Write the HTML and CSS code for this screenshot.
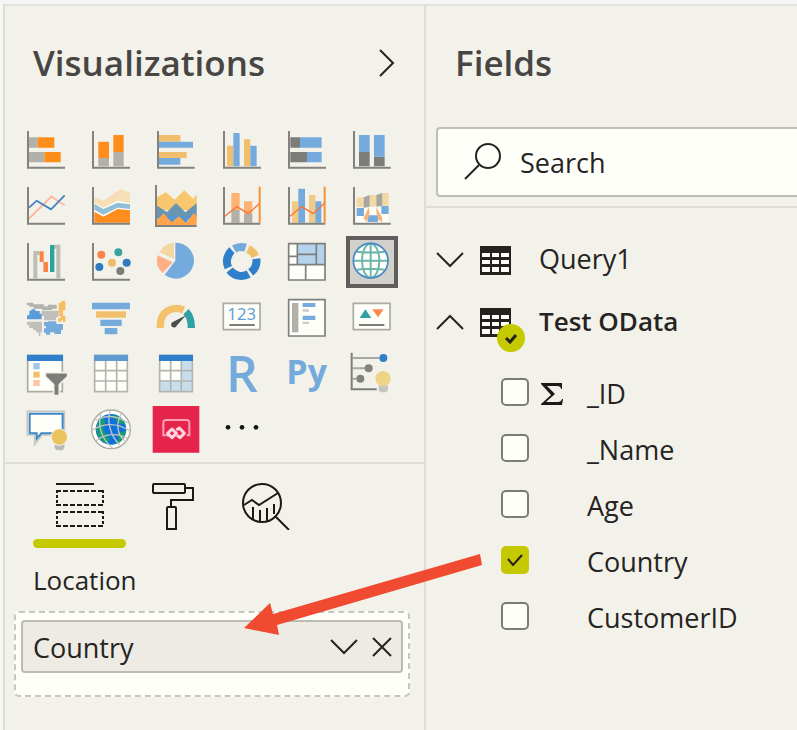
FILE: index.html
```html
<!DOCTYPE html>
<html lang="en">
<head>
<meta charset="utf-8">
<title>Report editor</title>
<link rel="stylesheet" href="styles.css">
</head>
<body>
<main class="workspace">
  <section class="panel visuals" aria-labelledby="vis-title">
    <header class="panel-header">
      <h2 id="vis-title">Visualizations</h2>
      <button class="plain" aria-label="Collapse pane"><svg width="18" height="30" viewBox="0 0 18 30"><path class="line" d="M2 2L15 15L2 28"/></svg></button>
    </header>

    <div class="gallery">
      <button aria-label="Stacked bar chart"><svg viewBox="20 12 156 156"><path fill="#b1b0ab" d="M47 52h26v31H47zM47 96h46v31H47z"/><path fill="#ff8d1c" d="M73 52h50v31H73zM93 96h49v31H93z"/><path class="axis" d="M44 33v110h111"/></svg></button>
      <button aria-label="Stacked column chart"><svg viewBox="216 12 156 156"><path fill="#b1b0ab" d="M256 114h32v25h-32zM301 96h31v43h-31z"/><path fill="#ff8d1c" d="M256 65h32v49h-32zM301 45h31v51h-31z"/><path class="axis" d="M240 33v110h111"/></svg></button>
      <button aria-label="Clustered bar chart"><svg viewBox="412 12 156 156"><path fill="#f1bf6c" d="M439 45h64v20h-64zM439 96h83v18h-83z"/><path fill="#75abdc" d="M439 65h102v18H439zM439 114h64v20h-64z"/><path class="axis" d="M436 33v110h110"/></svg></button>
      <button aria-label="Clustered column chart"><svg viewBox="20 12 156 156"><path fill="#f1bf6c" d="M53 77h19v62H53zM104 58h19v81h-19z"/><path fill="#75abdc" d="M72 39h19v100H72zM123 77h19v62h-19z"/><path class="axis" d="M44 33v110h111"/></svg></button>
      <button aria-label="100% stacked bar chart"><svg viewBox="216 12 156 156"><path fill="#7c7c79" d="M244 52h29v31h-29zM244 96h50v31h-50z"/><path fill="#75abdc" d="M273 52h65v31h-65zM294 96h44v31h-44z"/><path class="axis" d="M240 33v110h111"/></svg></button>
      <button aria-label="100% stacked column chart"><svg viewBox="412 12 156 156"><path fill="#7c7c79" d="M451 96h32v43h-32zM496 110h32v29h-32z"/><path fill="#75abdc" d="M451 45h32v51h-32zM496 45h32v65h-32z"/><path class="axis" d="M436 33v110h110"/></svg></button>

      <button aria-label="Line chart"><svg viewBox="20 180 156 156"><path fill="none" stroke="#ffb28d" stroke-width="5" d="M47 296L114 230L154 256"/><path fill="none" stroke="#3e7fc1" stroke-width="5" d="M47 263L70 242L113 268L154 226"/><path class="axis" d="M44 201v110h111"/></svg></button>
      <button aria-label="Area chart"><svg viewBox="216 180 156 156"><path fill="#f6dfb6" d="M244 230L270 242L323 207L351 218V252L314 243L271 264L244 248z"/><path fill="#fffffa" d="M244 248L271 264L314 243L351 250V273L314 268L271 290L244 275z"/><path fill="#8fbfd8" d="M244 251L271 267L314 248L351 253V267L314 263L271 284L244 269z"/><path fill="#ff8d1c" d="M244 275L271 290L314 267L351 271V308H244z"/><path class="axis" d="M240 201v110h111"/></svg></button>
      <button aria-label="Stacked area chart"><svg viewBox="412 180 156 156"><path fill="#f7c66d" d="M433 232L459 217L486 239L515 211L542 237L552 222V270H433z"/><path fill="#6795b2" d="M433 257L463 276L490 249L518 277L552 250V296H433z"/><path fill="#5595d2" d="M448 288H535L518 311H460z"/><path fill="#ffa44a" d="M433 300L453 280L477 307L499 289L520 309L543 280L552 289V316H433z"/><path class="axis" d="M430 195v123h122"/></svg></button>
      <button aria-label="Line and stacked column chart"><svg viewBox="20 180 156 156"><path fill="#b1b0ab" d="M66 270h25v38H66zM104 282h25v26h-25z"/><path fill="#ffb171" d="M66 219h25v51H66zM104 244h25v38h-25z"/><path class="axis" d="M44 201v110h109"/><path fill="none" stroke="#f97538" stroke-width="4" d="M47 289L82 260L117 281L151 250"/><path stroke="#f59132" stroke-width="6" d="M151 200v108"/></svg></button>
      <button aria-label="Line and clustered column chart"><svg viewBox="216 180 156 156"><path fill="#efcb86" d="M249 244h19v64h-19zM300 225h19v83h-19z"/><path fill="#75abdc" d="M268 206h20v102h-20zM319 244h18v64h-18z"/><path class="axis" d="M240 201v110h109"/><path fill="none" stroke="#f97538" stroke-width="4" d="M243 289L278 260L313 281L346 250"/><path stroke="#f59132" stroke-width="6" d="M347 200v108"/></svg></button>
      <button aria-label="Ribbon chart"><svg viewBox="412 180 156 156"><path fill="#fffffa" d="M444 230h96v78h-96z"/><path fill="#f4d8a4" d="M444 232h21v30h-21zM483 225h20v35h-20zM521 219h19v38h-19z"/><path fill="#a7a69f" d="M465 232L483 225V260L465 264zM503 225L521 219V258L503 260z"/><path fill="#75abdc" d="M444 264h22v24h-22zM518 258h22v24h-22zM477 286h31v20h-31z"/><path fill="#f9b47d" d="M466 292L480 261L483 281L474 306L464 295zM503 261L521 293V307L509 299L503 278z"/><path class="axis" d="M436 201v110h110"/></svg></button>

      <button aria-label="Waterfall chart"><svg viewBox="20 12 156 156"><path fill="none" stroke="#bdbdb8" stroke-width="12" d="M66 139V63h13"/><path fill="none" stroke="#bdbdb8" stroke-width="12" d="M118 44h17v95"/><path fill="#f98446" d="M79 58h12v32h13v30h12H91V90H79z"/><path fill="#f98446" d="M91 90h13v30H91z"/><path fill="#2ea39e" d="M110 39h13v81h-13z"/><path class="axis" d="M44 33v110h111"/></svg></button>
      <button aria-label="Scatter chart"><svg viewBox="216 12 156 156"><circle cx="265" cy="68" r="12" fill="#fa844a"/><circle cx="316" cy="61" r="12" fill="#39a3a0"/><circle cx="259" cy="105" r="12" fill="#2f7ac3"/><circle cx="297" cy="92" r="12" fill="#edbb67"/><circle cx="341" cy="92" r="12" fill="#2f7ac3"/><circle cx="322" cy="117" r="12" fill="#7c7c79"/><path class="axis" d="M240 33v110h111"/></svg></button>
      <button aria-label="Pie chart"><svg viewBox="412 12 156 156"><path fill="#75abdc" d="M488 86V32A54 54 0 1 1 456 128z"/><path fill="#f2d8a0" d="M484 80V32Q454 34 440 61z"/><path fill="#ffaf86" d="M480 91L435 70Q425 101 450 123z"/></svg></button>
      <button aria-label="Donut chart"><svg viewBox="20 12 156 156"><g fill="none" stroke-width="24"><path stroke="#2f7fcb" d="M68 55A44 44 0 0 0 57 107"/><path stroke="#2f7fcb" d="M61 114A44 44 0 0 0 118 126"/><path stroke="#2f7fcb" d="M124 121A44 44 0 0 0 141 80"/><path stroke="#75abdc" d="M74 51A44 44 0 0 1 109 47"/><path stroke="#f1bf6c" d="M116 51A44 44 0 0 1 138 73"/></g></svg></button>
      <button aria-label="Treemap"><svg viewBox="216 12 156 156"><path fill="#fffffa" d="M239 35h109v109H239z"/><path fill="#b6d3ee" d="M265 35h83v63h-83z"/><path fill="none" stroke="#7e7e7a" stroke-width="5" d="M239 35h109v109H239zM239 98h109M265 35v63M239 73h26M265 67h57M322 35v63M290 98v46"/></svg></button>
      <button class="selected" aria-label="Map" aria-pressed="true"><svg viewBox="412 12 156 156"><circle cx="486" cy="86" r="51" fill="#fffffa"/><g fill="none" stroke="#6db6ae" stroke-width="6"><ellipse cx="486" cy="86" rx="26" ry="51"/><path d="M486 35v102M435 86h102M444 59Q486 64 528 59M444 113Q486 108 528 113"/></g><circle cx="486" cy="86" r="52" fill="none" stroke="#4688c6" stroke-width="5"/></svg></button>

      <button aria-label="Filled map"><svg viewBox="20 180 156 156"><path fill="#b3b2ac" d="M41 212h19v5h31v6h13v-5h26v12h-13v4H86v-4H60v-6H48v-4h-7z"/><path fill="#c0bfba" d="M85 236h50v20h-7v9H92v-13h-7zM41 269h45v32h-5v12h-5v-12h-8v-7h-9v-6H48v-8h-7z"/><path fill="#f5bf61" d="M136 212h8v-6h12v29h-7v16h7v19h-7v-5h-6v5h-8v-12h7v-7h-6z"/><path fill="#5a9bda" d="M41 250h7v-14h6v-4h12v5h13v8h6v17H41z"/><path fill="#75abdc" d="M92 270h12v-2h25v8h20v17h-6v13h-20v-5h-13v7H98v-6h-6v-13h6v-7h-6z"/></svg></button>
      <button aria-label="Funnel"><svg viewBox="216 180 156 156"><path fill="#75abdc" d="M237 212h114v20H237zM262 263h64v19h-64zM275 288h38v19h-38z"/><path fill="#f1bf6c" d="M249 238h90v19h-90z"/></svg></button>
      <button aria-label="Gauge"><svg viewBox="412 180 156 156"><path fill="none" stroke="#f3c06c" stroke-width="22" d="M443 288V280C443 237 480 221 513 234"/><path fill="none" stroke="#31a2a3" stroke-width="22" d="M520 239C533 252 536 270 536 288"/><path fill="#4c4c49" d="M520 250L493 280A9 9 0 1 1 482 269z"/></svg></button>
      <button aria-label="Card"><svg viewBox="20 180 156 156"><path fill="#fffffa" stroke="#aaa9a4" stroke-width="5" d="M42 214h110v79H42z"/><text x="97" y="264" text-anchor="middle" class="digits">123</text><path stroke="#7c7c79" stroke-width="6" d="M60 279h76"/></svg></button>
      <button aria-label="Multi-row card"><svg viewBox="216 180 156 156"><path fill="#fffffa" stroke="#7e7e7a" stroke-width="5" d="M239 203h109v109H239z"/><path fill="#b1b0ab" d="M249 213h19v88h-19z"/><path fill="#75abdc" d="M281 213h38v12h-38zM281 251h38v13h-38z"/><path fill="#cbcac5" d="M281 232h19v7h-19zM281 269h19v7h-19z"/></svg></button>
      <button aria-label="KPI"><svg viewBox="412 180 156 156"><path fill="#fffffa" stroke="#aaa9a4" stroke-width="5" d="M434 214h110v79H434z"/><path fill="#2f9fa0" d="M453 258L470 232L488 258z"/><path fill="#fd8950" d="M491 232h34L508 256z"/><path stroke="#7c7c79" stroke-width="6" d="M451 279h76"/></svg></button>

      <button aria-label="Slicer"><svg viewBox="20 12 156 156"><path fill="#fffffa" stroke="#aaa9a4" stroke-width="5" d="M43 35h104v108H43z"/><path fill="#2f7fcb" d="M41 32h108v19H41z"/><path fill="#a3c6e8" d="M60 57h19v19H60z"/><path fill="#f1bf6c" d="M60 83h19v18H60z"/><path fill="#ffc3a5" d="M60 108h19v18H60z"/><path fill="#7c7c79" stroke="#f3f2ea" stroke-width="5" d="M96 86h67v12l-25 24v33h-17v-33L96 98z"/></svg></button>
      <button aria-label="Table"><svg viewBox="216 12 156 156"><path fill="#fffffa" stroke="#b4b3ae" stroke-width="5" d="M245 35h98v108h-98zM245 80h98M245 111h98M278 51v92M311 51v92"/><path fill="#5e9ad0" d="M243 32h102v19H243z"/></svg></button>
      <button aria-label="Matrix"><svg viewBox="412 12 156 156"><path fill="#fffffa" d="M441 35h98v108h-98z"/><path fill="#c7deef" d="M505 50h34v93h-98v-34h64z"/><path fill="none" stroke="#b4b3ae" stroke-width="5" d="M441 35h98v108h-98zM441 80h98M441 111h98M474 51v92M506 51v92"/><path fill="#2f7fcb" d="M439 32h102v19H439z"/></svg></button>
      <button aria-label="R script visual"><svg viewBox="20 12 156 156"><text x="98" y="145" text-anchor="middle" class="script-r">R</text></svg></button>
      <button aria-label="Python visual"><svg viewBox="216 12 156 156"><text x="293" y="121" text-anchor="middle" class="script-py">Py</text></svg></button>
      <button aria-label="Key influencers"><svg viewBox="412 12 156 156"><path fill="none" stroke="#a9a8a3" stroke-width="6" d="M432 42h80M432 73h38M432 104h12"/><path fill="none" stroke="#7e7e7a" stroke-width="6" d="M429 26v110h75"/><circle cx="524" cy="42" r="12" fill="#2f7fcb"/><circle cx="480" cy="73" r="12" fill="#83827d"/><circle cx="455" cy="104" r="12" fill="#83827d"/><path fill="#c7c6c4" d="M510 124h28v15l-5 6h-18l-5-6z"/><circle cx="523" cy="104" r="23" fill="#efd487"/></svg></button>

      <button aria-label="Q&amp;A"><svg viewBox="20 180 156 156"><path fill="#fffffa" stroke="#c6c5bf" stroke-width="5" d="M42 202h111v71H86L64 301V273H42z"/><path fill="#fffffa" stroke="#3f86c6" stroke-width="6" d="M49 209h99v59H84L70 284V268H49z"/><path fill="#b9b9b8" d="M124 294h29v18l-6 7h-17l-6-7z"/><circle cx="138" cy="279" r="26" fill="#f3f2ea"/><circle cx="138" cy="279" r="23" fill="#ebc45f"/></svg></button>
      <button aria-label="ArcGIS Maps"><svg viewBox="216 180 156 156"><circle cx="294" cy="256" r="57" fill="#fffffa"/><circle cx="294" cy="256" r="46" fill="#0d72de"/><path fill="#189d73" d="M258 228C274 218 280 230 274 242C266 253 275 267 288 278C292 294 283 299 272 296C252 282 243 257 258 228zM293 214C320 213 332 226 337 242L316 238L304 224zM315 266L338 260C338 280 322 300 306 299L316 285z"/><g fill="none" stroke="#c3c6bd" stroke-width="4"><path d="M263 210C254 250 267 285 298 312M291 201C281 232 293 278 320 302M324 210C308 242 313 273 335 290M248 229C286 209 319 218 344 237M238 258C274 237 313 237 349 260M249 291C275 267 318 267 343 283"/></g><circle cx="294" cy="256" r="58" fill="none" stroke="#aaa9a4" stroke-width="4"/></svg></button>
      <button aria-label="Power Apps"><svg viewBox="412 180 156 156"><path fill="#e5254c" d="M420 186h140v140H420z"/><path fill="none" stroke="#ff9fb4" stroke-width="6" d="M460 274h-8v-38q0-8 8-8h62q8 0 8 8v38h-8"/><path fill="none" stroke="#ffd5df" stroke-width="9" stroke-linejoin="round" d="M463 276l7-7M478 255l13 13-13 13-13-13zM491 258l9-6 15 16-13 13-9-7"/></svg></button>
      <button aria-label="More visuals"><svg viewBox="20 180 156 156"><g fill="#161616"><circle cx="56" cy="250" r="7"/><circle cx="98" cy="250" r="7"/><circle cx="140" cy="250" r="7"/></g></svg></button>
    </div>

    <nav class="tabs" aria-label="Visual settings">
      <button class="active" aria-label="Fields"><svg width="48" height="48" viewBox="0 0 48 48"><path class="bold" d="M0 2h38"/><g class="bold dashed"><path d="M0 9h48M0 23h48M0 30h48M0 44h48"/><path stroke-dasharray="3 2" d="M1 8v15M47 8v15M1 29v15M47 29v15"/></g></svg></button>
      <button aria-label="Format"><svg width="48" height="48" viewBox="0 0 48 48"><path class="bold" d="M5 2h30q1 0 1 1v7q0 1-1 1H5q-1 0-1-1V3q0-1 1-1zM36 6h8v12H22v7M19 25h7q1 0 1 1v21h-9V26q0-1 1-1z"/></svg></button>
      <button aria-label="Analytics"><svg width="48" height="48" viewBox="0 0 48 48"><circle class="bold" cx="20" cy="21" r="19"/><path class="bold" d="M2 23L10 18L17 23L36 11M11 25v12M18 28v11M25 26v13M32 22v10M33 34L47 48"/></svg></button>
    </nav>

    <div class="well">
      <h3>Location</h3>
      <div class="dropzone">
        <div class="chip">
          <span>Country</span>
          <button class="plain" aria-label="Field options"><svg width="28" height="16" viewBox="0 0 28 16"><path class="line" d="M1 1L14 14L27 1"/></svg></button>
          <button class="plain" aria-label="Remove field"><svg width="20" height="20" viewBox="0 0 20 20"><path class="line" d="M1 1L19 19M19 1L1 19"/></svg></button>
        </div>
      </div>
    </div>
  </section>

  <section class="panel fields" aria-labelledby="fields-title">
    <header class="panel-header"><h2 id="fields-title">Fields</h2></header>
    <div class="search-area">
      <label class="search">
        <svg width="38" height="38" viewBox="0 0 38 38"><circle class="line" cx="24" cy="13" r="12"/><path class="line" d="M15 22L1 36"/></svg>
        <input type="search" placeholder="Search" aria-label="Search">
      </label>
    </div>
    <div class="tables">
      <button class="table-row" aria-expanded="false">
        <svg width="28" height="16" viewBox="0 0 28 16"><path class="line" d="M1 1L14 14L27 1"/></svg>
        <span class="table-icon"><svg width="31" height="29" viewBox="0 0 31 29"><path fill="#24211e" d="M0 0h31v29H0z"/><path fill="#fffffa" d="M2 7h8v4H2zM12 7h7v4h-7zM21 7h8v4h-8zM2 14h8v4H2zM12 14h7v4h-7zM21 14h8v4h-8zM2 21h8v5H2zM12 21h7v5h-7zM21 21h8v5h-8z"/></svg></span>
        <span>Query1</span>
      </button>
      <button class="table-row open" aria-expanded="true">
        <svg width="28" height="16" viewBox="0 0 28 16"><path class="line" d="M1 15L14 2L27 15"/></svg>
        <span class="table-icon"><svg width="31" height="29" viewBox="0 0 31 29"><path fill="#24211e" d="M0 0h31v29H0z"/><path fill="#fffffa" d="M2 7h8v4H2zM12 7h7v4h-7zM21 7h8v4h-8zM2 14h8v4H2zM12 14h7v4h-7zM21 14h8v4h-8zM2 21h8v5H2zM12 21h7v5h-7zM21 21h8v5h-8z"/></svg><svg class="badge" width="28" height="28" viewBox="0 0 28 28"><circle cx="14" cy="14" r="14" fill="#c5c900"/><path fill="none" stroke="#24211e" stroke-width="3" d="M9 14l4 4 6-7"/></svg></span>
        <span>Test OData</span>
      </button>
      <ul class="columns">
        <li><label><span class="check"><input type="checkbox"></span><span class="kind"><svg width="22" height="22" viewBox="0 0 22 22"><path fill="#1c1a18" d="M0 0h21v6h-1q0-3-4-3H6l8 8-9 8h12q3 0 4-3h1l-1 6H0v-1l10-9L0 1z"/></svg></span>_ID</label></li>
        <li><label><span class="check"><input type="checkbox"></span><span class="kind"></span>_Name</label></li>
        <li><label><span class="check"><input type="checkbox"></span><span class="kind"></span>Age</label></li>
        <li><label><span class="check"><input type="checkbox" checked><svg width="16" height="12" viewBox="0 0 16 12"><path fill="none" stroke="#24211e" stroke-width="2" d="M1 5l5 6 9-10"/></svg></span><span class="kind"></span>Country</label></li>
        <li><label><span class="check"><input type="checkbox"></span><span class="kind"></span>CustomerID</label></li>
      </ul>
    </div>
  </section>

  <svg class="arrow" width="238" height="80" viewBox="0 0 238 80" aria-hidden="true"><path fill="#f04a30" d="M0 74L26 49L29 60L236 0L238 11L33 71L35 81z"/></svg>
</main>
</body>
</html>
```
FILE: styles.css
```css
* {
  box-sizing: border-box;
}

body {
  margin: 0;
  background: #f7f8f4;
  color: #252423;
  font: 27px/36px "Open Sans", "Noto Sans", sans-serif;
}

button {
  padding: 0;
  border: 0;
  background: none;
  color: inherit;
  font: inherit;
}

svg {
  display: block;
}

h2,
h3,
ul {
  margin: 0;
  padding: 0;
}

.workspace {
  position: relative;
  display: grid;
  grid-template-columns: 423px 1fr;
  min-height: 100vh;
  padding-left: 3px;
  border-top: 4px solid #f3f6f2;
}

.panel {
  min-width: 0;
  border-top: 2px solid #e0e2dd;
  border-left: 2px solid #deddd5;
  background: #f3f2ea;
}

.visuals {
  border-right: 2px solid #deddd5;
}

.fields {
  border-left: 0;
}

.panel-header {
  display: flex;
  align-items: center;
  justify-content: space-between;
  height: 112px;
  padding: 2px 28px 0;
}

.fields .panel-header {
  padding-left: 29px;
}

h2 {
  color: #484644;
  font-size: 35px;
  font-weight: 600;
  line-height: 48px;
}

.line {
  fill: none;
  stroke: #252423;
  stroke-width: 2;
}

.bold {
  fill: none;
  stroke: #1c1a18;
  stroke-width: 2;
}

.dashed {
  stroke-dasharray: 5 2;
}

.gallery {
  display: grid;
  grid-template-columns: repeat(6, 1fr);
  justify-items: center;
  row-gap: 4px;
  padding: 6px 19px 6px 8px;
}

.gallery button,
.gallery svg {
  width: 52px;
  height: 52px;
  overflow: visible;
}

.gallery .selected {
  background: #d2d0ca;
  box-shadow: inset 0 0 0 4px #605e5c;
}

.axis {
  fill: none;
  stroke: #83827e;
  stroke-width: 6;
}

.digits {
  fill: #5fa0d8;
  font: 50px/1 "Noto Sans", sans-serif;
}

.script-r {
  fill: #75abdc;
  font: 600 150px/1 "Open Sans", sans-serif;
}

.script-py {
  fill: #75abdc;
  font: 700 102px/1 "Open Sans", sans-serif;
}

.tabs {
  display: flex;
  border-top: 2px solid #deddd5;
  padding: 18px 28px 0;
}

.tabs button {
  display: flex;
  justify-content: center;
  width: 93px;
  height: 66px;
}

.tabs .active {
  flex-direction: column;
  align-items: center;
  justify-content: space-between;
}

.tabs .active::after {
  width: 100%;
  height: 9px;
  border-radius: 5px;
  background: #c5c900;
  content: "";
}

.well {
  padding: 14px 14px 0 9px;
}

h3 {
  padding-left: 19px;
  font-size: 26px;
  font-weight: 400;
}

.dropzone {
  height: 86px;
  margin-top: 13px;
  padding: 7px 5px;
  border: 2px dashed #c8c6c2;
  border-radius: 5px;
  background: #fffffa;
}

.chip {
  display: flex;
  align-items: center;
  gap: 14px;
  height: 53px;
  padding: 0 9px 0 10px;
  border: 2px solid #bebbb5;
  border-radius: 4px;
  background: #edebe3;
}

.chip span {
  flex: 1;
  padding-top: 2px;
}

.search-area {
  padding: 9px 0 9px 10px;
  border-bottom: 2px solid #deddd5;
}

.search {
  display: flex;
  align-items: center;
  gap: 18px;
  height: 70px;
  padding-left: 26px;
  border: 2px solid #c0beb9;
  border-right: 0;
  border-radius: 4px 0 0 4px;
  background: #fffffa;
}

.search input {
  flex: 1;
  min-width: 0;
  padding: 2px 0 0;
  border: 0;
  outline: 0;
  background: none;
  color: inherit;
  font: inherit;
}

.search input::placeholder {
  color: #252423;
  opacity: 1;
}

.tables {
  padding: 21px 10px;
}

.table-row {
  display: flex;
  align-items: center;
  gap: 16px;
  width: 100%;
  height: 62px;
  text-align: left;
}

.table-row > span:last-child {
  padding-bottom: 2px;
}

.open {
  font-size: 26px;
  font-weight: 600;
}

.table-icon {
  position: relative;
  margin-right: 12px;
}

.badge {
  position: absolute;
  top: 16px;
  left: 17px;
}

.columns {
  padding: 11px 0 0 65px;
  list-style: none;
}

.columns label {
  display: flex;
  align-items: center;
  height: 56px;
  padding-top: 4px;
}

.columns input {
  width: 28px;
  height: 28px;
  margin: 0;
  border: 2px solid #7d7b78;
  border-radius: 5px;
  appearance: none;
  background: #fffffa;
}

.columns input:checked {
  border-color: #c5c900;
  background: #c5c900;
}

.check {
  display: grid;
  place-items: center;
  margin-bottom: 4px;
}

.check > * {
  grid-area: 1 / 1;
}

.check svg {
  z-index: 1;
  pointer-events: none;
}

.kind {
  width: 46px;
  margin-left: 12px;
}

.arrow {
  position: absolute;
  top: 550px;
  left: 244px;
  overflow: visible;
  pointer-events: none;
}
```
